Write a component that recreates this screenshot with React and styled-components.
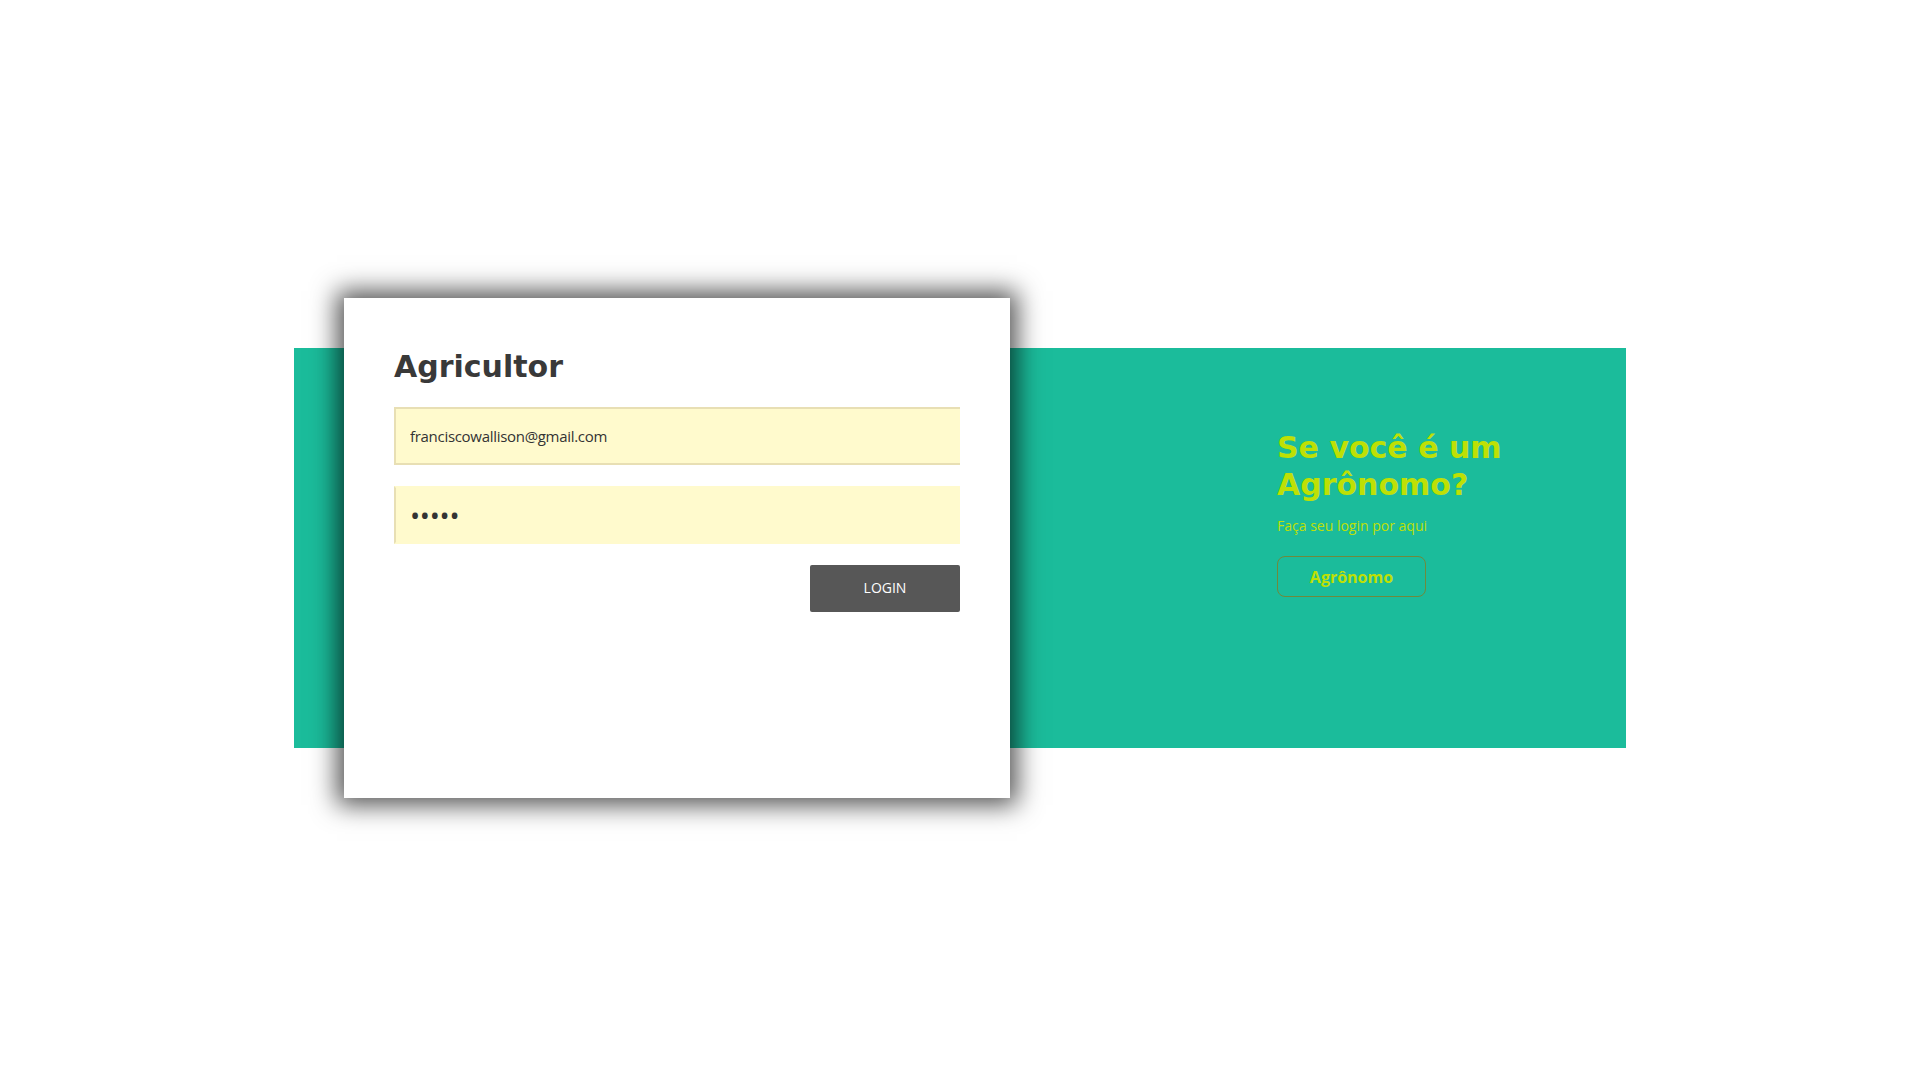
import React from "react";
import styled, { createGlobalStyle } from "styled-components";

const GlobalStyle = createGlobalStyle`
  html, body { margin: 0; padding: 0; background: #ffffff; }
  * { box-sizing: border-box; }
`;

const Page = styled.div`
  min-height: 1080px;
  padding-top: 16px;
  display: flex;
  align-items: center;
  justify-content: center;
`;

const Band = styled.section`
  width: 1332px;
  height: 400px;
  background: #1bbc9b;
  display: flex;
  align-items: center;
`;

const Card = styled.div`
  flex: none;
  width: 666px;
  height: 500px;
  margin-left: 50px;
  background: #ffffff;
  box-shadow: 0 0 24px 7px rgba(0, 0, 0, 0.68);
  padding: 51px 50px 0 50px;
  display: flex;
  flex-direction: column;
`;

const Title = styled.h1`
  margin: 0 0 22px 0;
  font-family: "DejaVu Sans", "Inter", sans-serif;
  font-weight: 700;
  font-size: 30px;
  line-height: 36px;
  color: #393939;
`;

const Field = styled.input`
  display: block;
  width: 100%;
  height: 58px;
  margin: 0 0 21px 0;
  padding: 0 14px;
  background: #fffacd;
  border: 2px solid ${(p) => (p.$framed ? "#e8dfb4" : "#fffacd")};
  border-left-color: #e8dfb4;
  border-right: none;
  outline: none;
  font-family: "Open Sans", sans-serif;
  font-size: ${(p) => (p.type === "password" ? "27px" : "15px")};
  color: #333333;
  letter-spacing: ${(p) => (p.type === "password" ? "-0.3px" : "-0.3px")};
`;

const Actions = styled.div`
  display: flex;
  justify-content: flex-end;
`;

const LoginButton = styled.button`
  width: 150px;
  height: 47px;
  padding: 0 0 2px 0;
  border: none;
  border-radius: 2px;
  background: #575757;
  color: #ffffff;
  font-family: "Open Sans", sans-serif;
  font-size: 14px;
  cursor: pointer;
`;

const Side = styled.div`
  align-self: flex-start;
  margin-left: 267px;
  padding-top: 81px;
  display: flex;
  flex-direction: column;
  align-items: flex-start;
`;

const SideTitle = styled.h2`
  margin: 0;
  max-width: 250px;
  font-family: "DejaVu Sans", "Inter", sans-serif;
  font-weight: 700;
  font-size: 30px;
  line-height: 37px;
  color: #bee005;
`;

const SideText = styled.p`
  margin: 13px 0 0 0;
  font-family: "Open Sans", sans-serif;
  font-size: 14px;
  color: #bee005;
`;

const OutlineButton = styled.button`
  margin-top: 21px;
  width: 149px;
  height: 41px;
  border: 1px solid #6f8a3c;
  border-radius: 8px;
  background: transparent;
  color: #bee005;
  font-family: "Open Sans", sans-serif;
  font-weight: 700;
  font-size: 16px;
  cursor: pointer;
`;

export default function App() {
  return (
    <>
      <GlobalStyle />
      <Page>
        <Band>
          <Card>
            <Title>Agricultor</Title>
            <Field $framed type="email" defaultValue="franciscowallison@gmail.com" />
            <Field type="password" defaultValue="12345" />
            <Actions>
              <LoginButton>LOGIN</LoginButton>
            </Actions>
          </Card>
          <Side>
            <SideTitle>Se você é um Agrônomo?</SideTitle>
            <SideText>Faça seu login por aqui</SideText>
            <OutlineButton>Agrônomo</OutlineButton>
          </Side>
        </Band>
      </Page>
    </>
  );
}
